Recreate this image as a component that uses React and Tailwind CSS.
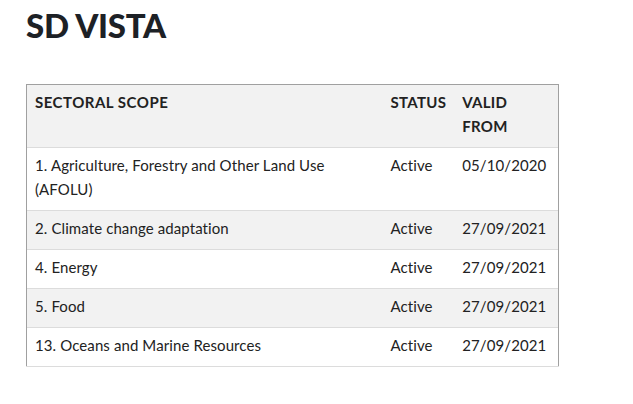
import React from 'react';

const rows = [
  { scope: '1. Agriculture, Forestry and Other Land Use (AFOLU)', status: 'Active', from: '05/10/2020' },
  { scope: '2. Climate change adaptation', status: 'Active', from: '27/09/2021' },
  { scope: '4. Energy', status: 'Active', from: '27/09/2021' },
  { scope: '5. Food', status: 'Active', from: '27/09/2021' },
  { scope: '13. Oceans and Marine Resources', status: 'Active', from: '27/09/2021' },
];

export default function App() {
  return (
    <div className="w-[633px] h-[404px] bg-white text-[#222] px-[26px] pt-[6px]" style={{ fontFamily: 'Lato, "Open Sans", sans-serif' }}>
      <h1 className="text-[33px] leading-[38px] font-black text-[#1d2126] tracking-[-0.25px]">SD VISTA</h1>

      {/* Sectoral scope table */}
      <table className="mt-[40px] w-[533px] border-collapse text-left text-[15px] leading-6 tracking-[0.1px]">
        <thead>
          <tr className="bg-[#f2f2f2]">
            <th className="w-[356px] border-t border-l border-[#a0a0a0] px-2 pt-[5px] pb-[9px] align-top font-bold uppercase text-[15px] tracking-[0.5px]">Sectoral Scope</th>
            <th className="w-[71px] border-t border-[#a0a0a0] px-2 pt-[5px] pb-[9px] align-top font-bold uppercase text-[15px] tracking-[0.3px]">Status</th>
            <th className="border-t border-r border-[#a0a0a0] px-2 pt-[5px] pb-[9px] align-top font-bold uppercase text-[15px] tracking-[0.3px]">Valid<br />From</th>
          </tr>
        </thead>
        <tbody>
          {rows.map((r, i) => (
            <tr key={i} className={`border-t border-[#dcdcdc] ${i % 2 === 1 ? 'bg-[#f2f2f2]' : 'bg-white'}`}>
              <td className={`border-l border-[#a0a0a0] px-2 pt-[5px] pb-[9px] align-top ${i === rows.length - 1 ? 'border-b border-b-[#dcdcdc]' : ''}`}>{r.scope}</td>
              <td className={`px-2 pt-[5px] pb-[9px] align-top ${i === rows.length - 1 ? 'border-b border-b-[#dcdcdc]' : ''}`}>{r.status}</td>
              <td className={`border-r border-[#a0a0a0] px-2 pt-[5px] pb-[9px] align-top ${i === rows.length - 1 ? 'border-b border-b-[#dcdcdc]' : ''}`}>{r.from}</td>
            </tr>
          ))}
        </tbody>
      </table>
    </div>
  );
}
